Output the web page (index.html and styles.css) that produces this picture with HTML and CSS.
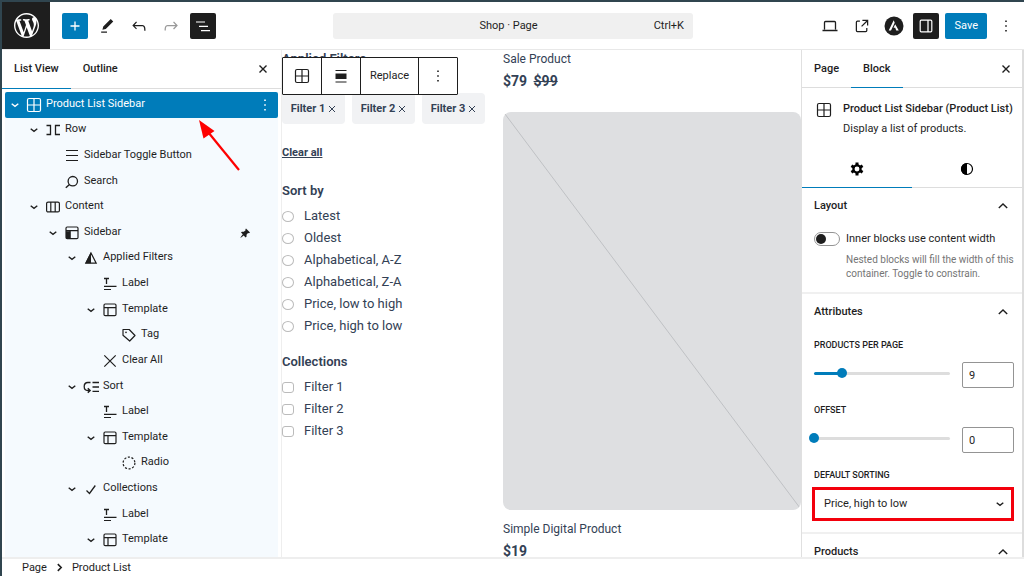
FILE: index.html
```html
<!DOCTYPE html>
<html lang="en">
<head>
<meta charset="utf-8">
<title>Shop · Page</title>
<link rel="stylesheet" href="styles.css">
</head>
<body>
<svg class="sprite" aria-hidden="true">
  <symbol id="chevron" viewBox="0 0 16 16"><path d="M4.700 6.700 8 9.300l3.300-2.600" fill="none" stroke="currentColor" stroke-width="1.400"/></symbol>
  <symbol id="up" viewBox="0 0 16 16"><path d="M3.800 10 8 6l4.200 4" fill="none" stroke="currentColor" stroke-width="1.400"/></symbol>
  <symbol id="close" viewBox="0 0 16 16"><path d="m4.500 4.500 7 7m0-7-7 7" fill="none" stroke="currentColor" stroke-width="1.400"/></symbol>
  <symbol id="dots" viewBox="0 0 16 16"><path d="M7.200 2.400h1.600V4H7.200zM7.200 7.200h1.600v1.600H7.200zM7.200 12h1.600v1.600H7.200z" fill="currentColor"/></symbol>
  <symbol id="grid" viewBox="0 0 16 16"><rect x="1.500" y="1.500" width="13" height="13" rx="1.500" fill="none" stroke="currentColor" stroke-width="1.200"/><path d="M8 1.500v13M1.500 8h13" stroke="currentColor" stroke-width="1.200"/></symbol>
  <symbol id="row" viewBox="0 0 16 16"><path d="M1.500 3.500h4v9h-4M15 3.500h-4.500v9H15" fill="none" stroke="currentColor" stroke-width="1.300"/></symbol>
  <symbol id="lines" viewBox="0 0 16 16"><path d="M2 2.500h12M2 7.500h12M2 12.500h12" stroke="currentColor" stroke-width="1.200"/></symbol>
  <symbol id="search" viewBox="0 0 16 16"><circle cx="8.800" cy="7.200" r="4.700" fill="none" stroke="currentColor" stroke-width="1.300"/><path d="m5.500 10.400-3.700 3.400" stroke="currentColor" stroke-width="1.400"/></symbol>
  <symbol id="columns" viewBox="0 0 16 16"><rect x="1.600" y="3.100" width="12.800" height="9.800" rx="1.500" fill="none" stroke="currentColor" stroke-width="1.200"/><path d="M5.800 3v10m4.400-10v10" stroke="currentColor" stroke-width="1.200"/></symbol>
  <symbol id="template" viewBox="0 0 16 16"><rect x="2" y="2" width="12" height="11.600" rx="1.200" fill="none" stroke="currentColor" stroke-width="1.200"/><path d="M2 5.600h12M6 5.600v8" stroke="currentColor" stroke-width="1.200"/></symbol>
  <symbol id="sidebar" viewBox="0 0 16 16"><rect x="2" y="2" width="12" height="11.600" rx="1.200" fill="none" stroke="currentColor" stroke-width="1.200"/><path d="M2 5.600h12M6 5.600v8" stroke="currentColor" stroke-width="1.200"/><path d="M2 6.200h4.500v7.400H2z" fill="currentColor"/></symbol>
  <symbol id="prism" viewBox="0 0 16 16"><path d="M8 3 2.800 13.200h10.400z" fill="none" stroke="currentColor" stroke-width="1.200"/><path d="M8 2v11.200H2.300z" fill="currentColor"/></symbol>
  <symbol id="label" viewBox="0 0 16 16"><path d="M2 2.500h5M4.500 2.500V8" stroke="currentColor" stroke-width="1.300"/><path d="M2 10.300h12.500M2 13.500h7" stroke="currentColor" stroke-width="1.200"/></symbol>
  <symbol id="tag" viewBox="0 0 16 16"><path d="M2 2.500h6.200l5.800 6-5.300 5.500L2 8.200z" fill="none" stroke="currentColor" stroke-width="1.200" stroke-linejoin="round"/><circle cx="5" cy="5.400" r=".8" fill="currentColor"/></symbol>
  <symbol id="clear" viewBox="0 0 16 16"><path d="m2.300 2.300 11.400 11.400m0-11.400L2.300 13.700" stroke="currentColor" stroke-width="1.200"/></symbol>
  <symbol id="sort" viewBox="0 0 16 16"><path d="M7.500 3.500H4.800c-4.800 0-4.800 8 0 8h1.700M4.800 9.300l2.400 2.200-2.400 2.300M9.500 3.500h6.500M9.500 8h6.500M9.500 12.300h6.500" fill="none" stroke="currentColor" stroke-width="1.300"/></symbol>
  <symbol id="radio" viewBox="0 0 16 16"><circle cx="8" cy="8" r="5.900" fill="none" stroke="currentColor" stroke-width="1.200" stroke-dasharray="2.100 1.600"/></symbol>
  <symbol id="check" viewBox="0 0 16 16"><path d="m3.500 9.500 3 3L12.300 4.500" fill="none" stroke="currentColor" stroke-width="1.300"/></symbol>
  <symbol id="pin" viewBox="0 0 16 16"><path d="m9 3.500 4 4-1 .7-1-.2-1.500 1.700.1 1.800-1 .9L6.700 10.500 3.800 12.800 3.400 12.400 5.800 9.300 4 7.600l.9-.9 1.900.1 1.800-1.600-.2-1z" fill="currentColor"/></symbol>
</svg>

<header class="topbar">
  <div class="group start">
    <a class="logo" href="#" aria-label="WordPress"><svg viewBox="0 0 20 20"><path d="M20 10c0-5.510-4.490-10-10-10C4.480 0 0 4.490 0 10c0 5.520 4.480 10 10 10 5.510 0 10-4.480 10-10zM7.780 15.370L4.370 6.220c.55-.02 1.170-.08 1.170-.08.5-.06.44-1.130-.06-1.110 0 0-1.450.11-2.370.11-.18 0-.37 0-.58-.01C4.120 2.690 6.870 1.110 10 1.110c2.330 0 4.450.87 6.050 2.340-.68-.11-1.650.39-1.650 1.580 0 .74.45 1.360.9 2.100.35.61.55 1.360.55 2.460 0 1.490-1.400 5-1.400 5l-3.030-8.370c.54-.02.82-.17.82-.17.5-.05.44-1.250-.06-1.220 0 0-1.440.12-2.380.12-.87 0-2.330-.12-2.330-.12-.5-.03-.56 1.200-.06 1.220l.92.08 1.260 3.410zM17.410 10c.24-.64.74-1.870.43-4.250.7 1.290 1.050 2.710 1.050 4.250 0 3.290-1.730 6.240-4.400 7.780.97-2.590 1.940-5.200 2.920-7.780zM6.100 18.090C3.120 16.650 1.110 13.530 1.110 10c0-1.300.23-2.480.72-3.590C3.250 10.300 4.670 14.200 6.100 18.090zm4.030-6.630l2.580 6.980c-.86.29-1.760.45-2.710.45-.79 0-1.570-.11-2.290-.33.81-2.380 1.620-4.740 2.420-7.100z" fill="#fff"/></svg></a>
    <button class="tool blue" aria-label="Add block"><svg viewBox="0 0 20 20"><path d="M10 5.500v9M5.500 10h9" stroke="currentColor" stroke-width="1.300"/></svg></button>
    <button class="tool" aria-label="Edit"><svg viewBox="0 0 24 24"><path d="m19.500 6.500-3-3-9 9-1 4 4-1zM12 18.500H5V20h7z" fill="currentColor"/></svg></button>
    <button class="tool" aria-label="Undo"><svg viewBox="0 0 24 24"><path d="M18.300 11.700c-.6-.6-1.400-.9-2.300-.9H6.700l2.900-3.300-1.100-1-4.500 5L8.500 16l1-1-2.700-2.700H16c.5 0 .9.2 1.300.5 1 1 1 3.400 1 4.500v.3h1.500v-.2c0-1.500 0-4.300-1.500-5.700z" fill="currentColor"/></svg></button>
    <button class="tool faded" aria-label="Redo"><svg viewBox="0 0 24 24"><path d="m15.600 6.500-1.100 1 2.900 3.300H8c-.9 0-1.700.3-2.300.9-1.400 1.500-1.400 4.200-1.400 5.600v.2h1.500v-.3c0-1.100 0-3.500 1-4.500.3-.3.7-.5 1.300-.5h9.200L14.500 15l1.100 1.100 4.600-4.600z" fill="currentColor"/></svg></button>
    <button class="tool dark" aria-label="List view"><svg viewBox="0 0 20 20"><path d="M3 6h9M6 10.300h9M8 14.700h9" stroke="currentColor" stroke-width="1.200"/></svg></button>
  </div>
  <button class="command"><span class="command-title">Shop · Page</span><span class="shortcut">Ctrl+K</span></button>
  <div class="group end">
    <button class="tool" aria-label="View"><svg viewBox="0 0 20 20"><path d="M4.500 13.500v-7q0-1 1-1h9q1 0 1 1v7M2.500 14.500h15" fill="none" stroke="currentColor" stroke-width="1.300"/></svg></button>
    <button class="tool" aria-label="Open site"><svg viewBox="0 0 24 24"><path d="M19.500 4.500h-7V6h4.440l-5.970 5.970 1.060 1.060L18 7.060v4.440h1.500v-7Zm-13 1a2 2 0 0 0-2 2v10a2 2 0 0 0 2 2h10a2 2 0 0 0 2-2v-3H17v3a.5.5 0 0 1-.5.5h-10a.5.5 0 0 1-.5-.5v-10a.5.5 0 0 1 .5-.5h3V5.500h-3Z" fill="currentColor"/></svg></button>
    <button class="tool" aria-label="Astra"><svg viewBox="0 0 20 20"><circle cx="10" cy="10" r="9.500" fill="#1e1e1e"/><path d="M9.700 4.300 4.700 14.500h2.300l3.700-7.700zM11.200 8.200l-1.700 3.600h1.700l1 2.700h2.600z" fill="#fff"/></svg></button>
    <button class="tool dark" aria-label="Settings"><svg viewBox="0 0 20 20"><rect x="4.200" y="4.200" width="11.600" height="11.600" rx="1" fill="none" stroke="currentColor" stroke-width="1.200"/><path d="M12 4v12" stroke="currentColor" stroke-width="1.300"/></svg></button>
    <button class="save">Save</button>
    <button class="tool" aria-label="Options"><svg viewBox="0 0 16 16"><use href="#dots"/></svg></button>
  </div>
</header>

<main class="workspace">
  <section class="list-panel">
    <div class="tabs">
      <button class="tab active">List View</button><button class="tab">Outline</button>
      <button class="icon-btn" aria-label="Close list view"><svg class="ico"><use href="#close"/></svg></button>
    </div>
    <ul class="tree">
      <li class="node l0 selected"><button class="twist" aria-label="Collapse"><svg class="ico"><use href="#chevron"/></svg></button><svg class="ico"><use href="#grid"/></svg><a href="#">Product List Sidebar</a><button class="extra" aria-label="Options"><svg class="ico"><use href="#dots"/></svg></button></li>
      <li class="node l1"><button class="twist" aria-label="Collapse"><svg class="ico"><use href="#chevron"/></svg></button><svg class="ico"><use href="#row"/></svg><a href="#">Row</a></li>
      <li class="node l2"><span class="twist"></span><svg class="ico"><use href="#lines"/></svg><a href="#">Sidebar Toggle Button</a></li>
      <li class="node l2"><span class="twist"></span><svg class="ico"><use href="#search"/></svg><a href="#">Search</a></li>
      <li class="node l1"><button class="twist" aria-label="Collapse"><svg class="ico"><use href="#chevron"/></svg></button><svg class="ico"><use href="#columns"/></svg><a href="#">Content</a></li>
      <li class="node l2"><button class="twist" aria-label="Collapse"><svg class="ico"><use href="#chevron"/></svg></button><svg class="ico"><use href="#sidebar"/></svg><a href="#">Sidebar</a><span class="extra pinned"><svg class="ico"><use href="#pin"/></svg></span></li>
      <li class="node l3"><button class="twist" aria-label="Collapse"><svg class="ico"><use href="#chevron"/></svg></button><svg class="ico"><use href="#prism"/></svg><a href="#">Applied Filters</a></li>
      <li class="node l4"><span class="twist"></span><svg class="ico"><use href="#label"/></svg><a href="#">Label</a></li>
      <li class="node l4"><button class="twist" aria-label="Collapse"><svg class="ico"><use href="#chevron"/></svg></button><svg class="ico"><use href="#template"/></svg><a href="#">Template</a></li>
      <li class="node l5"><span class="twist"></span><svg class="ico"><use href="#tag"/></svg><a href="#">Tag</a></li>
      <li class="node l4"><span class="twist"></span><svg class="ico"><use href="#clear"/></svg><a href="#">Clear All</a></li>
      <li class="node l3"><button class="twist" aria-label="Collapse"><svg class="ico"><use href="#chevron"/></svg></button><svg class="ico"><use href="#sort"/></svg><a href="#">Sort</a></li>
      <li class="node l4"><span class="twist"></span><svg class="ico"><use href="#label"/></svg><a href="#">Label</a></li>
      <li class="node l4"><button class="twist" aria-label="Collapse"><svg class="ico"><use href="#chevron"/></svg></button><svg class="ico"><use href="#template"/></svg><a href="#">Template</a></li>
      <li class="node l5"><span class="twist"></span><svg class="ico"><use href="#radio"/></svg><a href="#">Radio</a></li>
      <li class="node l3"><button class="twist" aria-label="Collapse"><svg class="ico"><use href="#chevron"/></svg></button><svg class="ico"><use href="#check"/></svg><a href="#">Collections</a></li>
      <li class="node l4"><span class="twist"></span><svg class="ico"><use href="#label"/></svg><a href="#">Label</a></li>
      <li class="node l4"><button class="twist" aria-label="Collapse"><svg class="ico"><use href="#chevron"/></svg></button><svg class="ico"><use href="#template"/></svg><a href="#">Template</a></li>
    </ul>
    <svg class="pointer" viewBox="0 0 44 54" aria-hidden="true"><path d="M41 52 10 14" stroke="#fe0000" stroke-width="2.200"/><path d="M1 2 16.500 13 5.500 20.500z" fill="#fe0000"/></svg>
  </section>

  <section class="canvas">
    <div class="filters">
      <h2>Applied Filters</h2>
      <div class="chips"><button class="chip">Filter 1<svg viewBox="0 0 8 8"><path d="m1 1 6 6m0-6L1 7" stroke="currentColor"/></svg></button><button class="chip">Filter 2<svg viewBox="0 0 8 8"><path d="m1 1 6 6m0-6L1 7" stroke="currentColor"/></svg></button><button class="chip">Filter 3<svg viewBox="0 0 8 8"><path d="m1 1 6 6m0-6L1 7" stroke="currentColor"/></svg></button></div>
      <a class="clear-all" href="#">Clear all</a>
      <h2>Sort by</h2>
      <div class="options">
        <label><input type="radio" name="sort">Latest</label>
        <label><input type="radio" name="sort">Oldest</label>
        <label><input type="radio" name="sort">Alphabetical, A-Z</label>
        <label><input type="radio" name="sort">Alphabetical, Z-A</label>
        <label><input type="radio" name="sort">Price, low to high</label>
        <label><input type="radio" name="sort">Price, high to low</label>
      </div>
      <h2>Collections</h2>
      <div class="options">
        <label><input type="checkbox">Filter 1</label>
        <label><input type="checkbox">Filter 2</label>
        <label><input type="checkbox">Filter 3</label>
      </div>
    </div>
    <div class="products">
      <p class="name">Sale Product</p>
      <p class="price">$79 <s>$99</s></p>
      <svg class="placeholder" viewBox="0 0 298 398" preserveAspectRatio="none" role="img" aria-label="Product image"><path d="m2 2 295 394" stroke="#bfc1c4"/></svg>
      <p class="name">Simple Digital Product</p>
      <p class="price">$19</p>
    </div>
    <div class="block-toolbar">
      <button aria-label="Product List"><svg class="ico"><use href="#grid"/></svg></button>
      <button aria-label="Align"><svg class="ico" viewBox="0 0 16 16"><path d="M2.500 2.500h11M2.500 14h11" stroke="currentColor" stroke-width="1.200"/><path d="M2.500 5.500h11v5.500h-11z" fill="currentColor"/></svg></button>
      <button class="replace">Replace</button>
      <button aria-label="Options"><svg class="ico"><use href="#dots"/></svg></button>
    </div>
  </section>

  <aside class="settings">
    <div class="tabs">
      <button class="tab">Page</button><button class="tab active">Block</button>
      <button class="icon-btn" aria-label="Close settings"><svg class="ico"><use href="#close"/></svg></button>
    </div>
    <div class="card">
      <svg class="ico"><use href="#grid"/></svg>
      <div><h3>Product List Sidebar (Product List)</h3><p>Display a list of products.</p></div>
    </div>
    <div class="modes">
      <button class="active" aria-label="Settings"><svg viewBox="0 0 16 16"><circle cx="8" cy="8" r="3.600" fill="none" stroke="#000" stroke-width="2.300"/><path d="M8 1.500v3M8 11.500v3M2.400 4.700 5 6.200M11 9.800l2.600 1.500M2.400 11.300 5 9.800M11 6.200l2.600-1.500" stroke="#000" stroke-width="3"/></svg></button>
      <button aria-label="Styles"><svg viewBox="0 0 16 16"><circle cx="8" cy="8" r="5.500" fill="none" stroke="#000" stroke-width="1.200"/><path d="M8 2a6 6 0 0 0 0 12z" fill="#000"/></svg></button>
    </div>
    <section class="group-box">
      <button class="fold">Layout<svg class="ico"><use href="#up"/></svg></button>
      <label class="switch-row"><input type="checkbox" role="switch" class="switch"><span>Inner blocks use content width</span></label>
      <p class="help">Nested blocks will fill the width of this container. Toggle to constrain.</p>
    </section>
    <section class="group-box">
      <button class="fold">Attributes<svg class="ico"><use href="#up"/></svg></button>
      <label class="caption" for="per-page">Products per page</label>
      <div class="slider-row"><div class="rail part"><input type="range" id="per-page" min="1" max="40" value="9"></div><input class="number" type="text" value="9" aria-label="Products per page value"></div>
      <label class="caption" for="offset">Offset</label>
      <div class="slider-row"><div class="rail"><input type="range" id="offset" min="0" max="40" value="0"></div><input class="number" type="text" value="0" aria-label="Offset value"></div>
      <label class="caption tight" for="sorting">Default sorting</label>
      <div class="select-box"><select id="sorting"><option>Price, high to low</option></select><svg class="ico"><use href="#chevron"/></svg></div>
    </section>
    <section class="group-box"><button class="fold">Products<svg class="ico"><use href="#up"/></svg></button></section>
  </aside>
</main>

<footer class="crumbs"><a href="#">Page</a><svg viewBox="0 0 8 8"><path d="m2.500 1 3 3-3 3" fill="none" stroke="currentColor" stroke-width="1.400"/></svg><a href="#">Product List</a></footer>
</body>
</html>
```
FILE: styles.css
```css
* { box-sizing: border-box; }

body {
  margin: 0;
  height: 100vh;
  display: flex;
  flex-direction: column;
  overflow: hidden;
  border-top: 2px solid #30454f;
  border-left: 2px solid #30454f;
  background: #fff;
  color: #1e1e1e;
  font: 11px/16px Roboto, sans-serif;
}

button, input, select { font: inherit; color: inherit; margin: 0; }
button { padding: 0; border: 0; background: none; }
a { color: inherit; text-decoration: none; }
h2, h3, p, ul { margin: 0; padding: 0; }
svg { display: block; flex: none; }
.sprite { position: absolute; width: 0; height: 0; }
.ico { width: 16px; height: 16px; }

/* Top bar */
.topbar {
  display: grid;
  grid-template-columns: 1fr minmax(0, 360px) 1fr;
  align-items: center;
  border-bottom: 1px solid #e8e8e8;
}
.group { display: flex; align-items: center; gap: 6px; }
.group.end { justify-content: flex-end; padding-right: 5px; }
.logo {
  display: grid;
  place-items: center;
  width: 48px;
  height: 47px;
  margin-right: 6px;
  background: #1e1e1e;
}
.logo svg { width: 25px; height: 25px; }
.tool { display: grid; place-items: center; width: 26px; height: 26px; border-radius: 2px; }
.tool svg { width: 20px; height: 20px; }
.tool.blue, .save { background: #007cba; color: #fff; }
.tool.dark { background: #1e1e1e; color: #fff; }
.tool.faded { color: #999; }
.save { height: 26px; padding: 0 9px; border-radius: 2px; }
.tool svg[viewBox="0 0 16 16"] { width: 16px; height: 16px; }
.command {
  display: grid;
  grid-template-columns: 1fr auto 1fr;
  height: 26px;
  padding-right: 9px;
  align-items: center;
  border-radius: 3px;
  background: #f0f0f0;
}
.command-title { grid-column: 2; }
.shortcut { text-align: right; }

/* Columns */
.workspace {
  flex: 1;
  min-height: 0;
  display: grid;
  grid-template-columns: 279px minmax(0, 1fr) 223px;
  grid-template-rows: minmax(0, 1fr);
}

.tabs { display: flex; height: 38px; flex: none; border-bottom: 1px solid #ddd; }
.tab { padding: 0 12px; margin-bottom: -1px; font-weight: 500; border-bottom: 1px solid transparent; }
.tab.active { border-color: #007cba; }
.icon-btn { margin-left: auto; padding: 0 10px; }

/* List view */
.list-panel { position: relative; display: flex; flex-direction: column; min-height: 0; }
.list-panel .tabs { height: 39px; }
.tree {
  flex: 1;
  display: grid;
  grid-auto-rows: 1fr;
  margin: 3px 3px 0;
  padding-bottom: 4px;
  list-style: none;
  background: #f5fafe;
}
.node { display: flex; align-items: center; gap: 3px; padding-right: 5px; }
.node a { padding: 0 0 2px 1px; }
.twist { width: 16px; }
.l0 { padding-left: 2px; }
.l1 { padding-left: 21px; }
.l2 { padding-left: 40px; }
.l3 { padding-left: 59px; }
.l4 { padding-left: 78px; }
.l5 { padding-left: 97px; }
.selected { background: #007cba; color: #fff; border-radius: 2px; }
.extra { margin-left: auto; }
.pinned { padding-right: 20px; }
.pointer { position: absolute; left: 196px; top: 68px; width: 44px; height: 54px; }

/* Canvas */
.canvas {
  position: relative;
  display: grid;
  grid-template-columns: 203px minmax(0, 1fr);
  align-items: start;
  gap: 18px;
  overflow: hidden;
  color: #334155;
  border-left: 1px solid #eee;
}
.filters h2 { font-size: 13px; line-height: 18px; font-weight: 600; }
.chips { display: grid; grid-template-columns: repeat(3, 1fr); gap: 7px; margin-top: 25px; }
.chip {
  display: flex;
  justify-content: center;
  align-items: center;
  gap: 3px;
  height: 31px;
  border-radius: 4px;
  background: #f1f2f4;
  font-weight: 700;
}
.chip svg { width: 8px; height: 8px; }
.clear-all { display: block; margin: 21px 0; font-weight: 700; text-decoration: underline; }
.options { display: grid; margin: 5px 0 16px; font-size: 13px; line-height: 22px; }
.options label { display: flex; align-items: center; gap: 10px; }
.options input {
  appearance: none;
  width: 12px;
  height: 11px;
  border: 1px solid #bbb;
  border-radius: 3px;
  background: #fff;
}
.options input[type="radio"] { border-radius: 50%; }
.name { font-size: 12px; line-height: 18px; }
.price { padding: 4px 0; font-size: 14px; line-height: 18px; font-weight: 700; }
.price s { margin-left: 3px; }
.placeholder {
  width: 100%;
  height: 398px;
  margin: 18px 0 10px;
  border-radius: 8px;
  background: #dedfe1;
}
.block-toolbar {
  position: absolute;
  left: 0;
  top: 7px;
  display: flex;
  height: 38px;
  border: 1px solid #1e1e1e;
  border-radius: 1px;
  background: #fff;
  color: #1e1e1e;
}
.block-toolbar button { padding: 0 11px; }
.block-toolbar button + button { border-left: 1px solid #1e1e1e; }
.block-toolbar .replace { padding: 0 9px; }

/* Settings */
.settings {
  display: flex;
  flex-direction: column;
  overflow: hidden;
  border-left: 1px solid #e0e0e0;
  border-right: 2px solid #ddd;
}
.settings .icon-btn { padding: 0 8px; }
.card { display: flex; gap: 11px; padding: 11px 0 12px 14px; line-height: 20px; }
.card .ico { margin-top: 3px; }
.card h3, .fold { font-size: 11px; font-weight: 500; }
.modes { display: grid; grid-template-columns: 1fr 1fr; height: 37px; flex: none; border-bottom: 1px solid #ddd; }
.modes button { display: grid; place-items: center; margin-bottom: -1px; border-bottom: 1px solid transparent; }
.modes .active { border-color: #007cba; }
.modes svg { width: 16px; height: 16px; }
.group-box { display: flex; flex-direction: column; padding: 0 8px 11px 12px; border-bottom: 2px solid #f0f0f0; }
.fold { display: flex; justify-content: space-between; align-items: center; height: 36px; padding-right: 3px; flex: none; }
.switch-row { display: flex; align-items: center; gap: 6px; padding-top: 7px; }
.switch {
  appearance: none;
  display: flex;
  align-items: center;
  width: 26px;
  height: 14px;
  padding: 1px;
  border: 1px solid #949494;
  border-radius: 7px;
}
.switch::before { content: ""; width: 10px; height: 10px; border-radius: 50%; background: #1e1e1e; }
.help { padding: 6px 0 0 32px; font-size: 10px; line-height: 14px; color: #757575; }
.caption { padding: 7px 0; font-size: 9px; line-height: 16px; font-weight: 500; text-transform: uppercase; }
.caption.tight { padding-bottom: 4px; }
.slider-row { display: flex; align-items: center; gap: 12px; padding: 2px 0 7px; }
.rail { flex: 1; display: flex; align-items: center; height: 3px; margin-bottom: 4px; border-radius: 2px; background: #ddd; }
.rail.part { background: linear-gradient(to right, #007cba 21%, #ddd 21%); }
.rail input { appearance: none; flex: 1; min-width: 0; height: 10px; margin: 0 -5px; background: none; }
.rail input::-webkit-slider-thumb { appearance: none; width: 10px; height: 10px; border-radius: 50%; background: #007cba; }
.number { width: 52px; height: 26px; padding: 0 6px; border: 1px solid #949494; border-radius: 2px; }
.select-box { display: grid; align-items: center; margin-left: -2px; border: 3px solid #f3000c; }
.select-box > * { grid-area: 1 / 1; }
.select-box select { appearance: none; width: 100%; height: 28px; padding: 0 9px; border: 0; background: #fff; }
.select-box .ico { justify-self: end; margin-right: 3px; pointer-events: none; }

/* Footer */
.crumbs { display: flex; align-items: center; gap: 8px; height: 19px; padding-left: 20px; border-top: 2px solid #eee; }
.crumbs svg { width: 9px; height: 9px; }
```
